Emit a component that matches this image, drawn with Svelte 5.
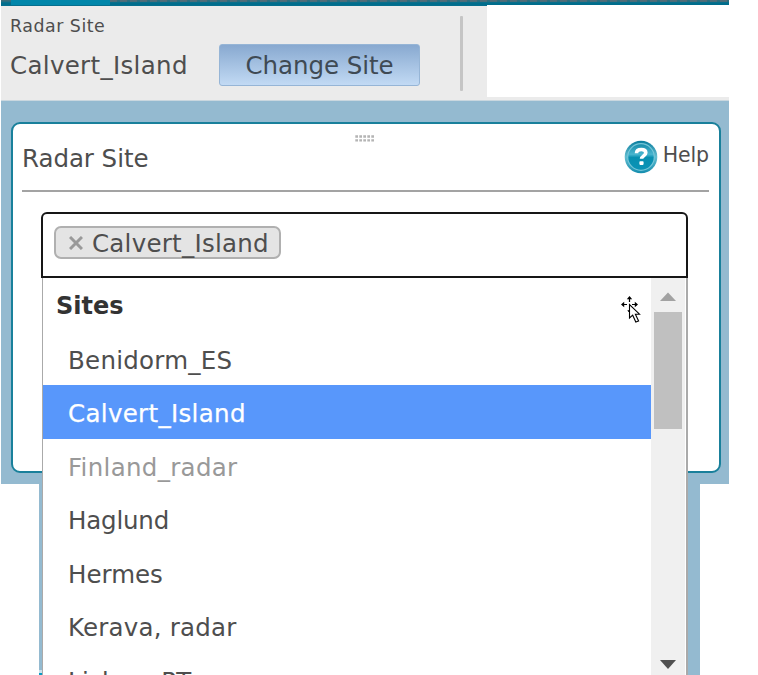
<script>
  const sites = [
    { name: 'Benidorm_ES', spacing: 0.26 },
    { name: 'Calvert_Island', spacing: 0.32, selected: true },
    { name: 'Finland_radar', spacing: 0.3, disabled: true },
    { name: 'Haglund', spacing: -0.2 },
    { name: 'Hermes', spacing: 0 },
    { name: 'Kerava, radar', spacing: 0.2 },
    { name: 'Lisboa_PT', spacing: 0.3 }
  ];
</script>

<main>
  <div class="app">
    <div class="strip"><div class="tab"></div><div class="tabs"></div></div>
    <header>
      <div class="tools">
        <div class="caption">Radar Site</div>
        <div class="current">
          <span class="wide">Calvert_Island</span>
          <button>Change Site</button>
        </div>
        <div class="divider"></div>
      </div>
      <div class="blank"></div>
    </header>
    <div class="backdrop">
      <section class="dialog">
        <svg class="grip" width="20" height="7" viewBox="0 0 20 7">
          {#each [0, 4, 8, 12, 16] as x}
            <path d="M{x + 0.3} .3h2.7v2.4h-2.7zM{x + 0.3} 4.2h2.7v2.4h-2.7z" fill="#b4b4b4" />
          {/each}
        </svg>
        <div class="title">
          <h1>Radar Site</h1>
          <div class="help">
            <svg width="34" height="34" viewBox="0 0 34 34">
              <defs>
                <linearGradient id="ball" x1="0" y1="0" x2="0" y2="1">
                  <stop offset="0" stop-color="#168ba9" />
                  <stop offset=".4" stop-color="#48b5cf" />
                  <stop offset=".52" stop-color="#078fb0" />
                  <stop offset="1" stop-color="#0c93b6" />
                </linearGradient>
                <linearGradient id="rim" x1="0" y1="0" x2="0" y2="1">
                  <stop offset="0" stop-color="#087d9e" />
                  <stop offset=".5" stop-color="#64bdd0" />
                  <stop offset="1" stop-color="#138dae" />
                </linearGradient>
              </defs>
              <circle cx="17" cy="17" r="16.3" fill="url(#rim)" />
              <circle cx="17" cy="17" r="13.3" fill="url(#ball)" stroke="#75c6d8" stroke-width="1.2" />
              <path d="M12.5 13.2c.1-2.5 2-3.7 4.8-3.7 2.8 0 4.5 1.1 4.5 3.3 0 3.1-4.2 3-4.2 6" fill="none" stroke="#fff" stroke-width="3.6" />
              <rect x="15.4" y="21.3" width="4.2" height="3.6" rx=".8" fill="#fff" />
            </svg>
            <span>Help</span>
          </div>
        </div>
        <div class="rule"></div>
        <div class="select">
          <div class="chip">
            <svg width="14" height="14" viewBox="0 0 14 14"><path d="M1 1L13 13M13 1L1 13" stroke="#999" stroke-width="3" /></svg>
            <span class="wide">Calvert_Island</span>
          </div>
        </div>
      </section>
    </div>
    <div class="lower"><div class="corner"></div></div>
  </div>

  <div class="dropdown">
    <div class="list">
      <div class="row group">Sites</div>
      {#each sites as site}
        <div class="row" class:selected={site.selected} class:disabled={site.disabled} style="letter-spacing: {site.spacing}px">{site.name}</div>
      {/each}
    </div>
    <div class="scrollbar">
      <svg class="arrow" width="16" height="9" viewBox="0 0 16 9"><path d="M0 9L8 .5L16 9z" fill="#a2a2a2" /></svg>
      <div class="thumb"></div>
      <svg class="arrow down" width="16" height="9" viewBox="0 0 16 9"><path d="M0 0L8 9L16 0z" fill="#505050" /></svg>
    </div>
  </div>

  <svg class="cursor" width="20" height="28" viewBox="0 0 20 28">
    <path d="M8.5 2v4M2 8.5h4M11 8.5h4M8 14v2" stroke="#000" stroke-width="1.2" />
    <path d="M8.5 0L11.2 3.2H5.8zM0 8.5L3.2 5.8V11.2zM17 8.5L13.8 5.8V11.2zM6 14.5h3v2z" fill="#000" />
    <path d="M8.5 8.5V22L11.7 19.2L14.8 26L17.6 25L14.4 18.2H18.5z" fill="#fff" stroke="#000" stroke-width="1.1" />
  </svg>
</main>

<style>
  :global(body) { background: #fff; }
  main, main * { box-sizing: border-box; }
  main {
    position: relative;
    width: 758px;
    height: 675px;
    overflow: hidden;
    background: #fff;
    color: #4e4e4e;
    font: 24.5px/30px "DejaVu Sans", Verdana, sans-serif;
  }
  .app { width: 728px; margin-left: 1px; }
  .strip { height: 5px; display: flex; background: linear-gradient(#3a6d7b 0 1px, #14718a 2px, #006d8c 3px); padding-left: 10px; }
  .tab { width: 99px; background: #0086aa; height: 5px; }
  .tabs { flex: 1; height: 2px; background: repeating-linear-gradient(90deg, #626c75 0 7px, #286e80 7px 10px); opacity: .6; }
  header { height: 96px; background: #ebebeb; display: flex; border-bottom: 1px solid #c9d7df; }
  .tools { width: 486px; position: relative; border-top: 1px solid #056f8e; padding: 9px 0 0 9px; }
  .caption { font-size: 17.4px; line-height: 22px; letter-spacing: .52px; }
  .current { display: flex; align-items: center; margin-top: 7px; height: 42px; white-space: nowrap; }
  .wide { letter-spacing: .32px; }
  .current .wide { width: 209px; padding-top: 2px; }
  button {
    width: 201px;
    height: 42px;
    padding: 2px 0 0;
    border: 1px solid #96b5d6;
    border-radius: 3px;
    background: linear-gradient(#88a9d0, #c2daf4);
    font: inherit;
    letter-spacing: -.05px;
    color: #3f4a54;
  }
  .divider { position: absolute; left: 458.5px; top: 10px; width: 3px; height: 75px; background: #c5c5c5; border-radius: 1px; }
  .blank { flex: 1; height: 92px; background: #fff; }
  .backdrop { height: 383px; background: #94bad0; padding: 21px 8px 0 10px; }
  .dialog { height: 351px; border: 2px solid #19809b; border-radius: 9px; background: #fff; padding: 10px 10px 0; display: flex; flex-direction: column; }
  .grip { align-self: center; margin-right: 2px; margin-top: 1px; margin-bottom: -1px; }
  .title { display: flex; justify-content: space-between; height: 48px; }
  h1 { font: inherit; margin: 3px 0 0 -1px; letter-spacing: -.05px; }
  .help { display: flex; font-size: 20.5px; gap: 5px; margin-top: -1px; letter-spacing: -.1px; }
  .help span { line-height: 31px; }
  .rule { height: 2px; background: #a3a3a3; margin: 1px -1px 0 -1px; width: 687px; flex: none; }
  .select { width: 647px; height: 66px; margin: 20px 0 0 18px; border: 2px solid #171717; border-radius: 6px 6px 0 0; padding: 12px 11px; flex: none; }
  .chip { display: flex; align-items: center; gap: 9px; width: 227px; height: 33px; border: 2px solid #b0b0b0; border-radius: 7px; background: #e4e4e4; padding: 0 0 0 13px; white-space: nowrap; }
  .chip .wide { padding-top: 2px; letter-spacing: .25px; }
  .lower { width: 661px; height: 191px; margin-left: 38px; background: #94bad0; display: flex; flex-direction: column; justify-content: flex-end; }
  .corner { width: 3px; height: 5px; background: linear-gradient(#c9e2ee 0 3px, #0a9cc4 3px); }
  .dropdown { position: absolute; left: 42px; top: 278px; width: 646px; height: 397px; background: #fff; border: solid #aaa; border-width: 0 2px 0 1px; display: flex; overflow: hidden; }
  .list { width: 608px; }
  .row { height: 53.5px; line-height: 57px; padding-left: 25px; white-space: nowrap; }
  .group { font-weight: 700; color: #333; padding-left: 13px; font-size: 24px; }
  .selected { background: #5897fb; color: #fff; -webkit-text-stroke: .25px #fff; }
  .disabled { color: #999; }
  .scrollbar { width: 34px; background: #f0f0f0; display: flex; flex-direction: column; align-items: center; padding: 14px 0 6px; }
  .arrow { flex: none; }
  .thumb { width: 28px; height: 117px; background: #c0c0c0; margin-top: 11px; flex: none; }
  .down { margin-top: auto; }
  .cursor { position: absolute; left: 621px; top: 296px; }
</style>
